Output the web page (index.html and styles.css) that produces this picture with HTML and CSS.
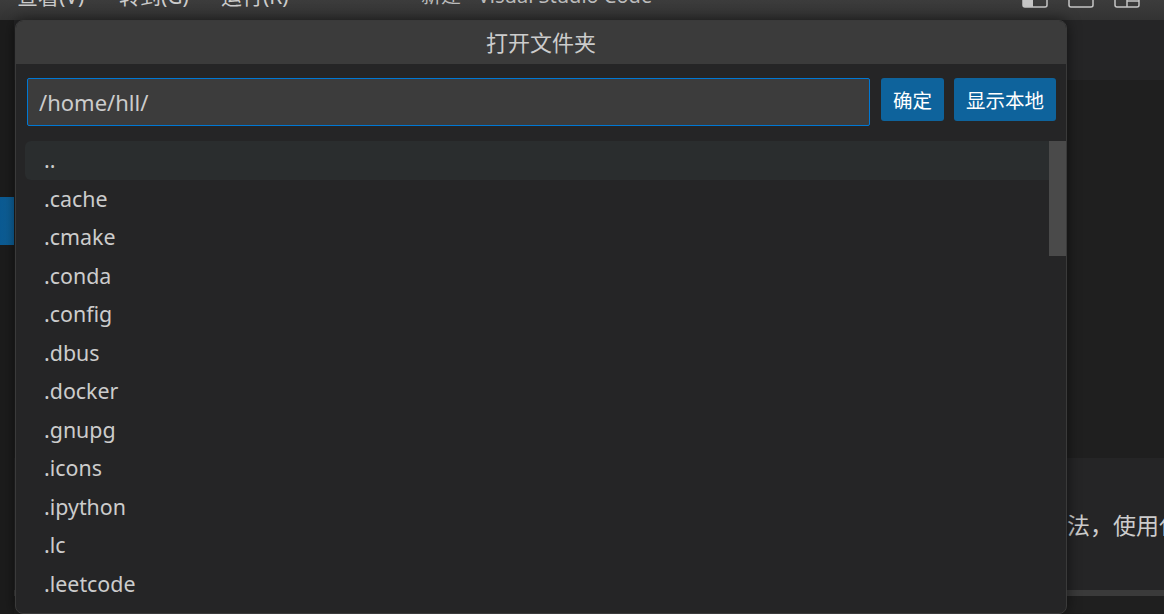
FILE: index.html
```html
<!DOCTYPE html>
<html lang="zh-CN">
<head>
  <meta charset="UTF-8" />
  <title>打开文件夹 - Visual Studio Code</title>
  <link rel="stylesheet" href="styles.css">
</head>
<body>
  <div class="titlebar">
    <div class="menu">
      <span>查看(V)</span>
      <span>转到(G)</span>
      <span>运行(R)</span>
    </div>
    <div class="window-title">新建 - Visual Studio Code</div>
    <div class="layout-icons">
      <svg width="26" height="8" viewBox="0 0 26 8"><rect x="1" y="-10" width="24" height="17" rx="2" fill="none" stroke="#c5c5c5" stroke-width="1.5"/><rect x="1" y="-10" width="10" height="17" fill="#c5c5c5"/></svg>
      <svg width="26" height="8" viewBox="0 0 26 8"><rect x="1" y="-10" width="24" height="17" rx="2" fill="none" stroke="#c5c5c5" stroke-width="1.5"/></svg>
      <svg width="26" height="8" viewBox="0 0 26 8"><rect x="1" y="-10" width="24" height="17" rx="2" fill="none" stroke="#c5c5c5" stroke-width="1.5"/><line x1="13" y1="-10" x2="13" y2="7" stroke="#c5c5c5" stroke-width="1.5"/><line x1="13" y1="1" x2="25" y2="1" stroke="#c5c5c5" stroke-width="1.5"/></svg>
    </div>
  </div>

  <div class="workbench">
    <div class="activitybar">
      <div class="active-item"></div>
    </div>
    <div class="editor">
      <div class="tabs"></div>
      <div class="editor-body"></div>
      <div class="panel">
        <p>在这里我们介绍一种新的方法，使用代码</p>
      </div>
      <div class="hscroll"></div>
      <div class="editor-foot"></div>
    </div>
  </div>

  <div class="dialog">
    <div class="dialog-header">打开文件夹</div>
    <div class="dialog-body">
      <div class="path-row">
        <input class="path-input" type="text" value="/home/hll/">
        <button class="btn">确定</button>
        <button class="btn">显示本地</button>
      </div>
      <div class="file-list">
        <div class="row selected">..</div>
        <div class="row">.cache</div>
        <div class="row">.cmake</div>
        <div class="row">.conda</div>
        <div class="row">.config</div>
        <div class="row">.dbus</div>
        <div class="row">.docker</div>
        <div class="row">.gnupg</div>
        <div class="row">.icons</div>
        <div class="row">.ipython</div>
        <div class="row">.lc</div>
        <div class="row">.leetcode</div>
        <div class="scroll-thumb"></div>
      </div>
    </div>
  </div>
</body>
</html>
```

FILE: styles.css
```css
body {
  margin: 0;
  width: 1164px;
  height: 614px;
  overflow: hidden;
  position: relative;
  background: #1f1f1f;
  font-family: 'Noto Sans', 'Noto Sans CJK SC', sans-serif;
  color: #cccccc;
}

.titlebar {
  height: 20px;
  display: flex;
  align-items: flex-end;
  background: linear-gradient(#3c3c3c, #333333);
  overflow: hidden;
  position: relative;
}

.menu {
  display: flex;
  gap: 30px;
  padding-left: 17px;
  font-size: 21px;
  line-height: 20px;
  margin-bottom: 14px;
  color: #cccccc;
}

.menu span {
  width: 72px;
}

.window-title {
  margin-left: 128px;
  font-size: 20px;
  line-height: 20px;
  margin-bottom: 14px;
  color: #bbbbbb;
}

.layout-icons {
  margin-left: auto;
  margin-right: 24px;
  display: flex;
  gap: 20px;
  align-self: flex-start;
}

.workbench {
  display: flex;
  height: 594px;
}

.activitybar {
  width: 15px;
  background: #1c1c1c;
  padding-top: 177px;
}

.active-item {
  height: 48px;
  background: linear-gradient(90deg, #0b5a92, #0e639c);
  width: 14px;
}

.editor {
  flex: 1;
  display: flex;
  flex-direction: column;
}

.tabs {
  height: 60px;
  background: #252526;
}

.editor-body {
  height: 378px;
  background: #1f1f1f;
}

.panel {
  height: 132px;
  background: #252526;
  overflow: hidden;
  white-space: nowrap;
  display: flex;
  align-items: center;
}

.panel p {
  margin: 0;
  padding-left: 777px;
  font-family: 'Noto Sans CJK SC', sans-serif;
  font-size: 23px;
  color: #cccccc;
}

.hscroll {
  height: 6px;
  background: #3a3a3a;
}

.editor-foot {
  flex: 1;
  background: #1f1f1f;
}

.dialog {
  position: absolute;
  left: 15px;
  top: 20px;
  width: 1050px;
  height: 592px;
  background: #252526;
  border: 1px solid #3a3a3a;
  border-radius: 8px;
  overflow: hidden;
  box-shadow: 0 0 14px rgba(0, 0, 0, 0.55);
}

.dialog-header {
  height: 43px;
  background: #3b3b3b;
  text-align: center;
  font-size: 22px;
  line-height: 43px;
  color: #cccccc;
}

.dialog-body {
  padding: 14px 10px 0 10px;
}

.path-row {
  display: flex;
  align-items: flex-start;
  gap: 10px;
  padding-left: 1px;
}

.path-input {
  flex: 1;
  height: 48px;
  box-sizing: border-box;
  margin-right: 1px;
  background: #3c3c3c;
  border: 1px solid #0078d4;
  border-radius: 2px;
  color: #cccccc;
  font-family: 'Noto Sans', sans-serif;
  font-size: 22px;
  padding: 0 11px;
  outline: none;
}

.btn {
  height: 43px;
  padding: 0 12px;
  background: #0e639c;
  color: #ffffff;
  border: none;
  border-radius: 3px;
  font-family: 'Noto Sans CJK SC', sans-serif;
  font-size: 19.5px;
}

.file-list {
  position: relative;
  margin-top: 15px;
  margin-right: -2px;
  margin-left: -1px;
}

.row {
  height: 38.55px;
  line-height: 38.5px;
  padding-left: 19px;
  font-size: 21.4px;
  color: #cccccc;
  border-radius: 6px;
}

.row.selected {
  background: #2a2d2e;
}

.scroll-thumb {
  position: absolute;
  top: 0;
  right: -8px;
  width: 17px;
  height: 115px;
  background: #4a4a4a;
}
```
